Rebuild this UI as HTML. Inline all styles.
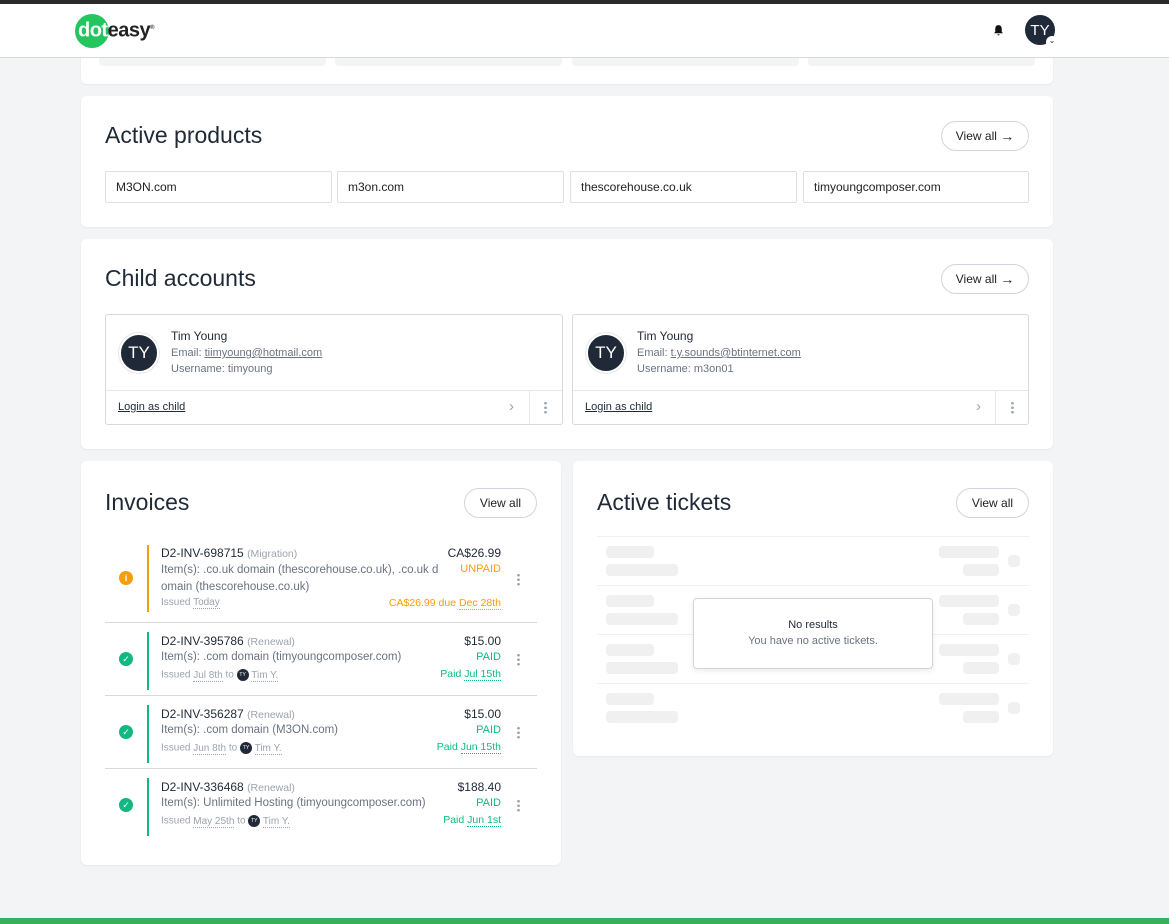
<!DOCTYPE html>
<html><head><meta charset="utf-8"><style>
*{box-sizing:border-box;margin:0;padding:0}
body{width:1169px;height:924px;background:#f3f4f6;font-family:"Liberation Sans",sans-serif;color:#1f2937;position:relative;overflow:hidden}
.a{position:absolute}
.card{position:absolute;background:#fff;border-radius:6px;box-shadow:0 1px 2px rgba(0,0,0,.05)}
h2{position:absolute;font-weight:400;font-size:23px;color:#1f2937}
.btn{position:absolute;border:1px solid #d1d5db;border-radius:16px;height:30px;font-size:12px;color:#222;display:flex;align-items:center;justify-content:center;background:#fff}
.inp{position:absolute;top:75px;height:32px;border:1px solid #dcdfe3;border-radius:2px;font-size:12px;padding:8px 10px;color:#222}
.av{position:absolute;border-radius:50%;background:#1f2937;color:#fff;display:flex;align-items:center;justify-content:center;border:2px solid #fff;box-shadow:0 0 0 1px #e5e7eb}
.t12{font-size:12px}.g{color:#6b7280}.l{color:#9ca3af}
.u{border-bottom:1px dotted #9ca3af}
.sk{position:absolute;background:#f0f0f0;border-radius:4px;height:12px}
.dots{position:absolute;width:3px;height:13px;background:radial-gradient(circle,#9ca3af 1.2px,transparent 1.5px) 0 0/3px 4.5px}
.hdr{z-index:5}
</style></head><body>
<div class="card" style="left:81px;top:40px;width:972px;height:44px"></div>
<div class="a" style="left:99px;top:58px;width:227px;height:8px;background:#f3f4f6;border-radius:0 0 4px 4px"></div>
<div class="a" style="left:335px;top:58px;width:227px;height:8px;background:#f3f4f6;border-radius:0 0 4px 4px"></div>
<div class="a" style="left:572px;top:58px;width:227px;height:8px;background:#f3f4f6;border-radius:0 0 4px 4px"></div>
<div class="a" style="left:808px;top:58px;width:227px;height:8px;background:#f3f4f6;border-radius:0 0 4px 4px"></div>

<div class="a hdr" style="left:0;top:0;width:1169px;height:4px;background:#2b2b2b"></div>
<div class="a hdr" style="left:0;top:4px;width:1169px;height:54px;background:#fff;border-bottom:1px solid #d9d9d9"></div>
<div class="a hdr" style="left:75px;top:14px;width:34px;height:34px;border-radius:50%;background:#22c55e"></div>
<div class="a hdr" style="left:78px;top:15px;font-size:20px;letter-spacing:-0.5px;line-height:26px;font-weight:bold"><span style="color:#fff">dot</span><span style="color:#222">easy</span><sup style="font-size:6px">®</sup></div>
<svg class="a hdr" style="left:992px;top:24px" width="13" height="13" viewBox="0 0 12 12"><path d="M6 1C4 1 3 2.5 3 4.5V7L2 8.5H10L9 7V4.5C9 2.5 8 1 6 1Z M5 9.5H7A1 1 0 0 1 5 9.5Z" fill="#111"/></svg>
<div class="av hdr" style="left:1023px;top:13px;width:34px;height:34px;font-size:15px;box-shadow:none">TY</div>
<div class="a hdr" style="left:1046px;top:36px;width:12px;height:12px;border-radius:50%;background:#fff;font-size:8px;text-align:center;line-height:9px;z-index:6">⌄</div>

<div class="card" style="left:81px;top:96px;width:972px;height:131px">
<h2 style="left:24px;top:26px">Active products</h2>
<div class="btn" style="left:860px;top:25px;width:88px">View all&nbsp;<b style="font-size:14px">→</b></div>
<div class="inp" style="left:24px;width:227px">M3ON.com</div>
<div class="inp" style="left:256px;width:227px">m3on.com</div>
<div class="inp" style="left:489px;width:227px">thescorehouse.co.uk</div>
<div class="inp" style="left:722px;width:226px">timyoungcomposer.com</div>
</div>

<div class="card" style="left:81px;top:239px;width:972px;height:210px">
<h2 style="left:24px;top:26px">Child accounts</h2>
<div class="btn" style="left:860px;top:25px;width:88px">View all&nbsp;<b style="font-size:14px">→</b></div>
<div class="a" style="left:24px;top:75px;width:458px;height:111px;border:1px solid #d9d9d9;border-radius:3px">
 <div class="av" style="left:13px;top:18px;width:40px;height:40px;font-size:17px">TY</div>
 <div class="a" style="left:65px;top:14px;font-size:12px">Tim Young</div>
 <div class="a g" style="left:65px;top:32px;font-size:11px">Email: <span style="text-decoration:underline">tiimyoung@hotmail.com</span></div>
 <div class="a g" style="left:65px;top:48px;font-size:11px">Username: timyoung</div>
 <div class="a" style="left:0;top:75px;width:456px;border-top:1px solid #e5e7eb"></div>
 <div class="a" style="left:423px;top:75px;height:34px;border-left:1px solid #e5e7eb"></div>
 <div class="a" style="left:12px;top:86px;font-size:11px;text-decoration:underline">Login as child</div>
 <div class="a l" style="left:403px;top:83px;font-size:15px">›</div>
 <div class="dots" style="left:438px;top:86px"></div>
</div>
<div class="a" style="left:491px;top:75px;width:457px;height:111px;border:1px solid #d9d9d9;border-radius:3px">
 <div class="av" style="left:13px;top:18px;width:40px;height:40px;font-size:17px">TY</div>
 <div class="a" style="left:64px;top:14px;font-size:12px">Tim Young</div>
 <div class="a g" style="left:64px;top:32px;font-size:11px">Email: <span style="text-decoration:underline">t.y.sounds@btinternet.com</span></div>
 <div class="a g" style="left:64px;top:48px;font-size:11px">Username: m3on01</div>
 <div class="a" style="left:0;top:75px;width:455px;border-top:1px solid #e5e7eb"></div>
 <div class="a" style="left:422px;top:75px;height:34px;border-left:1px solid #e5e7eb"></div>
 <div class="a" style="left:12px;top:86px;font-size:11px;text-decoration:underline">Login as child</div>
 <div class="a l" style="left:403px;top:83px;font-size:15px">›</div>
 <div class="dots" style="left:438px;top:86px"></div>
</div>
</div>

<div class="card" style="left:81px;top:461px;width:480px;height:404px">
<h2 style="left:24px;top:28px">Invoices</h2>
<div class="btn" style="left:383px;top:27px;width:73px">View all</div>
<div class="a" style="left:38px;top:110px;width:14px;height:14px;border-radius:50%;background:#f59e0b;color:#fff;font-size:9px;font-weight:bold;text-align:center;line-height:14px">i</div>
<div class="a" style="left:66px;top:84px;width:2px;height:67px;background:#f59e0b"></div>
<div class="a t12" style="left:80px;top:85px">D2-INV-698715 <span class="l" style="font-size:10.5px">(Migration)</span></div>
<div class="a g" style="left:80px;top:101px;width:290px;font-size:11.5px;line-height:17px">Item(s): .co.uk domain (thescorehouse.co.uk), .co.uk d omain (thescorehouse.co.uk)</div>
<div class="a l" style="left:80px;top:136px;font-size:10px">Issued <span class="u">Today</span></div>
<div class="a t12" style="right:60px;top:85px">CA$26.99</div>
<div class="a" style="right:60px;top:102px;font-size:11px;color:#f59e0b">UNPAID</div>
<div class="a" style="right:60px;top:136px;font-size:10.5px;color:#f59e0b">CA$26.99 due <span style="border-bottom:1px dotted #f59e0b">Dec 28th</span></div>
<div class="dots" style="left:436px;top:112px"></div>
<div class="a" style="left:24px;top:161px;width:432px;border-top:1px solid #d9d9d9"></div>

<div class="a" style="left:38px;top:191px;width:14px;height:14px;border-radius:50%;background:#10b981;color:#fff;font-size:9px;text-align:center;line-height:14px">✓</div>
<div class="a" style="left:66px;top:171px;width:2px;height:58px;background:#10b981"></div>
<div class="a t12" style="left:80px;top:173px">D2-INV-395786 <span class="l" style="font-size:10.5px">(Renewal)</span></div>
<div class="a g" style="left:80px;top:190px;font-size:11.5px">Item(s): .com domain (timyoungcomposer.com)</div>
<div class="a l" style="left:80px;top:208px;font-size:10px">Issued <span class="u">Jul 8th</span> to <span style="display:inline-block;width:12px;height:12px;border-radius:50%;background:#1f2937;color:#fff;font-size:5px;text-align:center;line-height:12px;vertical-align:middle">TY</span> <span class="u">Tim Y.</span></div>
<div class="a t12" style="right:60px;top:173px">$15.00</div>
<div class="a" style="right:60px;top:190px;font-size:11px;color:#10b981">PAID</div>
<div class="a" style="right:60px;top:207px;font-size:10.5px;color:#10b981">Paid <span style="border-bottom:1px dotted #10b981">Jul 15th</span></div>
<div class="dots" style="left:436px;top:192px"></div>
<div class="a" style="left:24px;top:234px;width:432px;border-top:1px solid #d9d9d9"></div>

<div class="a" style="left:38px;top:264px;width:14px;height:14px;border-radius:50%;background:#10b981;color:#fff;font-size:9px;text-align:center;line-height:14px">✓</div>
<div class="a" style="left:66px;top:244px;width:2px;height:58px;background:#10b981"></div>
<div class="a t12" style="left:80px;top:246px">D2-INV-356287 <span class="l" style="font-size:10.5px">(Renewal)</span></div>
<div class="a g" style="left:80px;top:263px;font-size:11.5px">Item(s): .com domain (M3ON.com)</div>
<div class="a l" style="left:80px;top:281px;font-size:10px">Issued <span class="u">Jun 8th</span> to <span style="display:inline-block;width:12px;height:12px;border-radius:50%;background:#1f2937;color:#fff;font-size:5px;text-align:center;line-height:12px;vertical-align:middle">TY</span> <span class="u">Tim Y.</span></div>
<div class="a t12" style="right:60px;top:246px">$15.00</div>
<div class="a" style="right:60px;top:263px;font-size:11px;color:#10b981">PAID</div>
<div class="a" style="right:60px;top:280px;font-size:10.5px;color:#10b981">Paid <span style="border-bottom:1px dotted #10b981">Jun 15th</span></div>
<div class="dots" style="left:436px;top:265px"></div>
<div class="a" style="left:24px;top:307px;width:432px;border-top:1px solid #d9d9d9"></div>

<div class="a" style="left:38px;top:337px;width:14px;height:14px;border-radius:50%;background:#10b981;color:#fff;font-size:9px;text-align:center;line-height:14px">✓</div>
<div class="a" style="left:66px;top:317px;width:2px;height:58px;background:#10b981"></div>
<div class="a t12" style="left:80px;top:319px">D2-INV-336468 <span class="l" style="font-size:10.5px">(Renewal)</span></div>
<div class="a g" style="left:80px;top:336px;font-size:11.5px">Item(s): Unlimited Hosting (timyoungcomposer.com)</div>
<div class="a l" style="left:80px;top:354px;font-size:10px">Issued <span class="u">May 25th</span> to <span style="display:inline-block;width:12px;height:12px;border-radius:50%;background:#1f2937;color:#fff;font-size:5px;text-align:center;line-height:12px;vertical-align:middle">TY</span> <span class="u">Tim Y.</span></div>
<div class="a t12" style="right:60px;top:319px">$188.40</div>
<div class="a" style="right:60px;top:336px;font-size:11px;color:#10b981">PAID</div>
<div class="a" style="right:60px;top:353px;font-size:10.5px;color:#10b981">Paid <span style="border-bottom:1px dotted #10b981">Jun 1st</span></div>
<div class="dots" style="left:436px;top:338px"></div>
</div>

<div class="card" style="left:573px;top:461px;width:480px;height:295px">
<h2 style="left:24px;top:28px">Active tickets</h2>
<div class="btn" style="left:383px;top:27px;width:73px">View all</div>
</div>
<div class="a" style="left:597px;top:536px;width:432px;border-top:1px solid #f0f0f0"></div>
<div class="a" style="left:597px;top:585px;width:432px;border-top:1px solid #f0f0f0"></div>
<div class="a" style="left:597px;top:634px;width:432px;border-top:1px solid #f0f0f0"></div>
<div class="a" style="left:597px;top:683px;width:432px;border-top:1px solid #f0f0f0"></div>
<div class="sk" style="left:606px;top:546px;width:48px"></div><div class="sk" style="left:606px;top:564px;width:72px"></div><div class="sk" style="left:939px;top:546px;width:60px"></div><div class="sk" style="left:963px;top:564px;width:36px"></div><div class="sk" style="left:1008px;top:555px;width:12px"></div>
<div class="sk" style="left:606px;top:595px;width:48px"></div><div class="sk" style="left:606px;top:613px;width:72px"></div><div class="sk" style="left:939px;top:595px;width:60px"></div><div class="sk" style="left:963px;top:613px;width:36px"></div><div class="sk" style="left:1008px;top:604px;width:12px"></div>
<div class="sk" style="left:606px;top:644px;width:48px"></div><div class="sk" style="left:606px;top:662px;width:72px"></div><div class="sk" style="left:939px;top:644px;width:60px"></div><div class="sk" style="left:963px;top:662px;width:36px"></div><div class="sk" style="left:1008px;top:653px;width:12px"></div>
<div class="sk" style="left:606px;top:693px;width:48px"></div><div class="sk" style="left:606px;top:711px;width:72px"></div><div class="sk" style="left:939px;top:693px;width:60px"></div><div class="sk" style="left:963px;top:711px;width:36px"></div><div class="sk" style="left:1008px;top:702px;width:12px"></div>
<div class="a" style="left:693px;top:598px;width:240px;height:71px;background:#fff;border:1px solid #d1d5db;border-radius:4px;box-shadow:0 2px 6px rgba(0,0,0,.08);text-align:center">
 <div style="font-size:11px;margin-top:20px;color:#1f2937">No results</div>
 <div style="font-size:11px;margin-top:4px;color:#6b7280">You have no active tickets.</div>
</div>
<div class="a" style="left:0;top:918px;width:1169px;height:6px;background:#34b15a"></div>
</body></html>
